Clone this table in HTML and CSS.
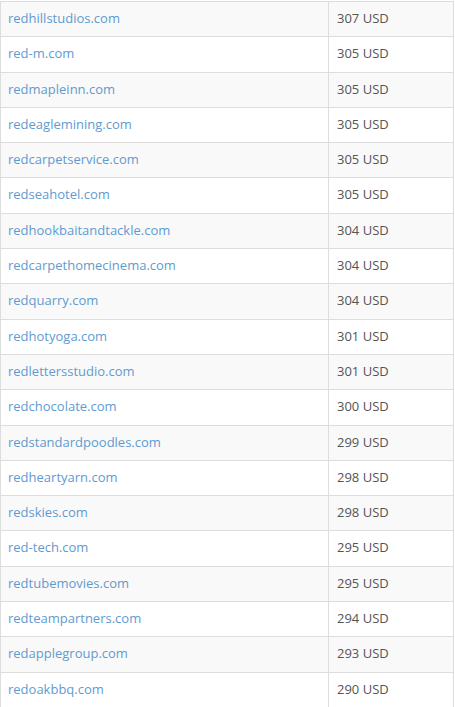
FILE: index.html
```html
<!DOCTYPE html>
<html>
<head>
<meta charset="utf-8">
<link rel="stylesheet" href="styles.css">
</head>
<body>
<table class="domains">
<tbody>
<tr><td class="name"><a href="#">redhillstudios.com</a></td><td class="price">307 USD</td></tr>
<tr><td class="name"><a href="#">red-m.com</a></td><td class="price">305 USD</td></tr>
<tr><td class="name"><a href="#">redmapleinn.com</a></td><td class="price">305 USD</td></tr>
<tr><td class="name"><a href="#">redeaglemining.com</a></td><td class="price">305 USD</td></tr>
<tr><td class="name"><a href="#">redcarpetservice.com</a></td><td class="price">305 USD</td></tr>
<tr><td class="name"><a href="#">redseahotel.com</a></td><td class="price">305 USD</td></tr>
<tr><td class="name"><a href="#">redhookbaitandtackle.com</a></td><td class="price">304 USD</td></tr>
<tr><td class="name"><a href="#">redcarpethomecinema.com</a></td><td class="price">304 USD</td></tr>
<tr><td class="name"><a href="#">redquarry.com</a></td><td class="price">304 USD</td></tr>
<tr><td class="name"><a href="#">redhotyoga.com</a></td><td class="price">301 USD</td></tr>
<tr><td class="name"><a href="#">redlettersstudio.com</a></td><td class="price">301 USD</td></tr>
<tr><td class="name"><a href="#">redchocolate.com</a></td><td class="price">300 USD</td></tr>
<tr><td class="name"><a href="#">redstandardpoodles.com</a></td><td class="price">299 USD</td></tr>
<tr><td class="name"><a href="#">redheartyarn.com</a></td><td class="price">298 USD</td></tr>
<tr><td class="name"><a href="#">redskies.com</a></td><td class="price">298 USD</td></tr>
<tr><td class="name"><a href="#">red-tech.com</a></td><td class="price">295 USD</td></tr>
<tr><td class="name"><a href="#">redtubemovies.com</a></td><td class="price">295 USD</td></tr>
<tr><td class="name"><a href="#">redteampartners.com</a></td><td class="price">294 USD</td></tr>
<tr><td class="name"><a href="#">redapplegroup.com</a></td><td class="price">293 USD</td></tr>
<tr><td class="name"><a href="#">redoakbbq.com</a></td><td class="price">290 USD</td></tr>
</tbody>
</table>
</body>
</html>
```
FILE: styles.css
```css
html, body {
  margin: 0;
  padding: 0;
  background: #ffffff;
}
body {
  padding-top: 1px;
  font-family: "Open Sans", "Liberation Sans", sans-serif;
  font-size: 13px;
  color: #555555;
}
.domains {
  width: 454px;
  border-collapse: collapse;
  border-spacing: 0;
}
.domains td {
  border: 1px solid #dddddd;
  padding: 7px 8px 9px 8px;
  line-height: 18.3px;
  text-align: left;
  vertical-align: top;
}
.domains tr:nth-child(odd) td {
  background: #f9f9f9;
}
.domains td.name {
  width: 312px;
  padding-left: 7px;
}
.domains a {
  color: #5f9bd0;
  text-decoration: none;
}
```
